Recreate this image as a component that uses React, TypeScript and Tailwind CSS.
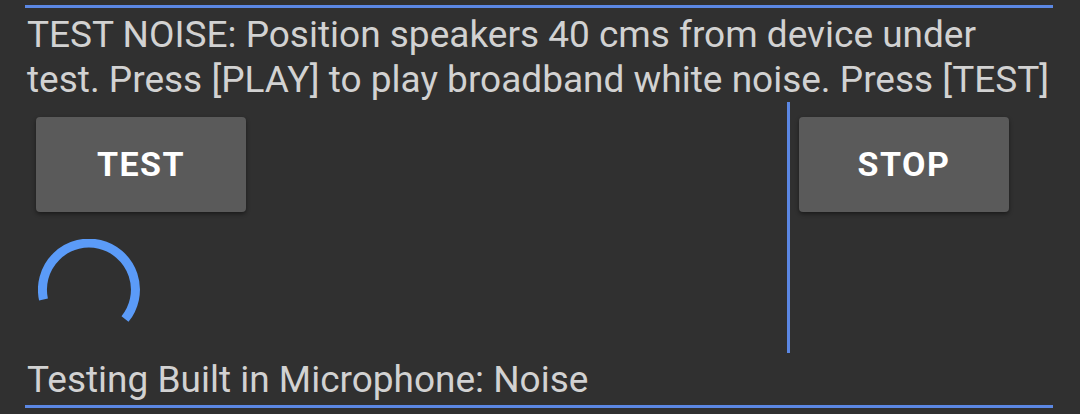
import React from "react";

export default function App() {
  return (
    <div className="h-[414px] w-[1080px] overflow-hidden bg-[#303030] font-['Roboto',sans-serif]">
      <div className="mx-[25px] w-[1028px] pt-[5px]">
        {/* top rule */}
        <div className="h-[3px] bg-[#5b87e3]" />

        {/* instructions */}
        <p className="mt-[4px] h-[90px] whitespace-nowrap px-[2px] text-[37px] leading-[45px] text-[#d2d2d2]">
          TEST NOISE: Position speakers 40 cms from device under
          <br />
          test. Press [PLAY] to play broadband white noise. Press [TEST]
        </p>

        {/* controls */}
        <div className="flex h-[251px]">
          <div className="flex-1 pl-[11px] pt-[15px]">
            <button className="flex h-[95px] w-[210px] items-center justify-center rounded-[4px] bg-[#5a5a5a] text-[34px] font-bold tracking-[1.5px] text-white shadow-[0_2px_4px_rgba(0,0,0,0.45)]">
              TEST
            </button>
            <svg
              className="ml-[2px] mt-[27px]"
              width="102"
              height="102"
              viewBox="0 0 102 102"
            >
              <path
                d="M 5.5 60.5 A 46.5 46.5 0 1 1 87 80"
                fill="none"
                stroke="#5b9bf8"
                strokeWidth="9"
              />
            </svg>
          </div>
          <div className="w-[3px] bg-[#5b87e3]" />
          <div className="w-[263px] pl-[9px] pt-[15px]">
            <button className="flex h-[95px] w-[210px] items-center justify-center rounded-[4px] bg-[#5a5a5a] text-[34px] font-bold tracking-[1.5px] text-white shadow-[0_2px_4px_rgba(0,0,0,0.45)]">
              STOP
            </button>
          </div>
        </div>

        {/* status */}
        <p className="mt-[5px] px-[2px] text-[37px] leading-[44px] text-[#d2d2d2]">
          Testing Built in Microphone: Noise
        </p>
        <div className="mt-[3px] h-[3px] bg-[#5b87e3]" />
      </div>
    </div>
  );
}
